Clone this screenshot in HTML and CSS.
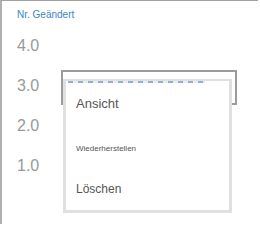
FILE: index.html
```html
<!DOCTYPE html>
<html lang="de">
<head>
    <meta charset="UTF-8">
    <meta name="viewport" content="width=device-width, initial-scale=1.0">
    <title>Nr. Geändert</title>
    <link rel="stylesheet" href="styles.css">
</head>
<body>
    <div class="panel">
        <div class="title">Nr. Geändert</div>

        <div class="axis">
            <div class="tick">4.0</div>
            <div class="tick">3.0</div>
            <div class="tick">2.0</div>
            <div class="tick">1.0</div>
        </div>

        <!-- selection rectangle, sits under the context menu -->
        <div class="selection"></div>

        <div class="menu">
            <div class="menu-focus"></div>
            <div class="item item-view">Ansicht</div>
            <div class="item item-restore">Wiederherstellen</div>
            <div class="item item-delete">Löschen</div>
        </div>
    </div>
</body>
</html>
```

FILE: styles.css
```css
body {
    margin: 0;
    background: white;
    font-family: "Liberation Sans", Arial, sans-serif;
}
.panel {
    position: relative;
    width: 258px;
    height: 224px;
    border-left: 2px solid #b0b0b0;
    border-top: 1px solid #a0a0a0;
    padding: 8px 0 0 15px;
    box-sizing: border-box;
}
.title {
    font-size: 10px;
    line-height: 12px;
    color: #3b85c8;
}
.axis {
    margin-top: 5px;
}
.tick {
    height: 40px;
    line-height: 40px;
    font-size: 16px;
    color: #999;
}
.selection {
    position: absolute;
    left: 59px;
    top: 69px;
    width: 176px;
    height: 35px;
    border: 2px solid #9c9c9c;
    box-sizing: border-box;
}
.menu {
    position: absolute;
    left: 61px;
    top: 78px;
    width: 169px;
    height: 134px;
    background: white;
    border: 3px solid #e0e0e0;
    border-top-width: 2px;
    box-sizing: border-box;
    display: flex;
    flex-direction: column;
}
.menu-focus {
    height: 2px;
    width: 137px;
    margin-left: 2px;
    background: repeating-linear-gradient(90deg, #8db2da 0 5px, #ececec 5px 10px);
}
.item {
    display: flex;
    align-items: center;
    padding-left: 10px;
    color: #555;
}
.item-view {
    height: 40px;
    font-size: 13px;
}
.item-restore {
    height: 50px;
    font-size: 8px;
}
.item-delete {
    height: 32px;
    font-size: 12px;
}
```
